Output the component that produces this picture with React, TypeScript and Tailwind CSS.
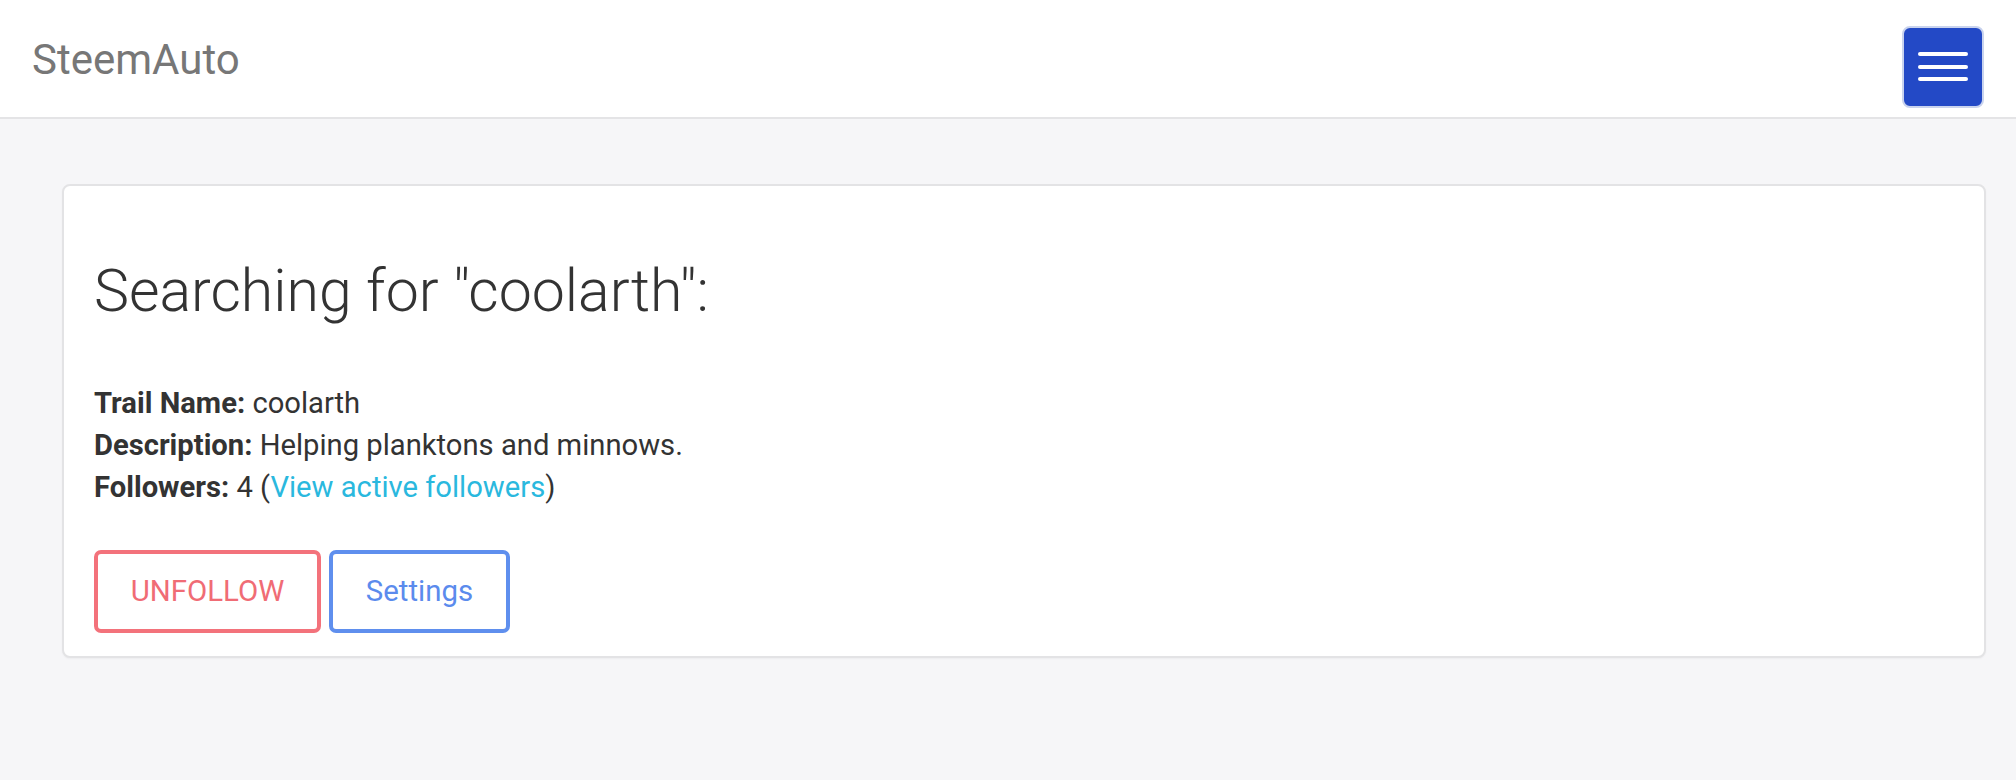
import React from "react";

export default function App() {
  return (
    <div
      className="min-h-[780px] w-full bg-[#f6f6f8] text-[#333]"
      style={{ fontFamily: "Roboto, 'Liberation Sans', sans-serif" }}
    >
      <header className="flex h-[119px] items-center justify-between border-b-2 border-[#e4e4e6] bg-white pl-[32px] pr-[32px]">
        <span className="text-[42px] leading-none text-[#777] mt-[2px]">SteemAuto</span>
        <button className="flex h-[82px] w-[82px] flex-col items-center justify-center gap-[8.5px] rounded-[8px] border-2 border-[#c9d3ee] bg-[#2349c6] mt-[16px]">
          <span className="block h-[4px] w-[50px] rounded-full bg-white" />
          <span className="block h-[4px] w-[50px] rounded-full bg-white" />
          <span className="block h-[4px] w-[50px] rounded-full bg-white" />
        </button>
      </header>

      <main className="pt-[65px] pl-[62px] pr-[30px]">
        <section className="rounded-[8px] border-2 border-[#e3e3e5] bg-white pl-[30px] pr-[32px] pt-[70px] pb-[23px] shadow-[0_1px_2px_rgba(0,0,0,0.04)]">
          <h1 className="text-[59px] font-light leading-[1.2] text-[#333]">
            Searching for "coolarth":
          </h1>
          <div className="mt-[55px] text-[29.2px] leading-[42px]">
            <div>
              <b className="font-bold">Trail Name:</b> coolarth
            </div>
            <div>
              <b className="font-bold">Description:</b> Helping planktons and minnows.
            </div>
            <div>
              <b className="font-bold">Followers:</b> 4 (
              <a className="text-[#2ab8de]">View active followers</a>)
            </div>
          </div>
          <div className="mt-[42px] flex gap-[8px]">
            <button className="h-[83px] w-[227px] rounded-[7px] border-[4px] border-[#f3727b] text-[29.4px] text-[#f06c75]">
              UNFOLLOW
            </button>
            <button className="h-[83px] w-[181px] rounded-[7px] border-[4px] border-[#5f8fee] text-[29.4px] text-[#5b8bed]">
              Settings
            </button>
          </div>
        </section>
      </main>
    </div>
  );
}
